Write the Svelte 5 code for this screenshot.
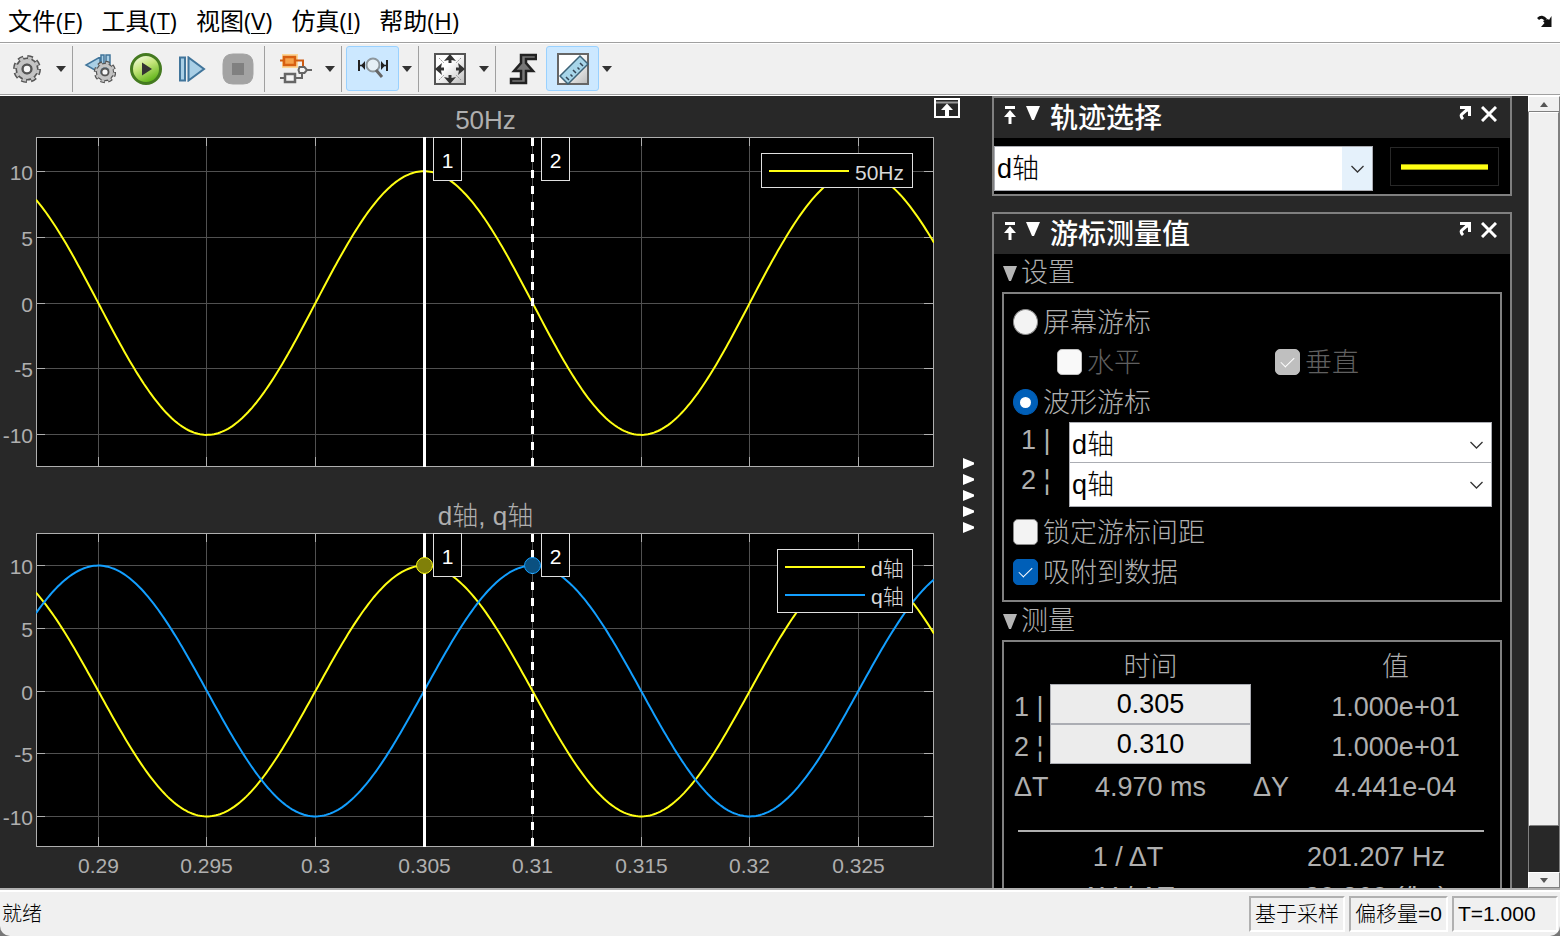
<script lang="ts">
    type Trace = { name: string; color: string; peak: number };
    type Plot = { id: string; title: string; traces: Trace[]; bottom: number; showTimes: boolean; markers: boolean };

    const menus = [
        { label: '文件', key: 'F' },
        { label: '工具', key: 'T' },
        { label: '视图', key: 'V' },
        { label: '仿真', key: 'I' },
        { label: '帮助', key: 'H' }
    ];

    const tMin = 0.28713;
    const tMax = 0.32844;
    const yMin = -12.4;
    const yMax = 12.56;
    const period = 0.02;
    const left = 36;
    const top = 41;

    const times = [0.29, 0.295, 0.3, 0.305, 0.31, 0.315, 0.32, 0.325];
    const levels = [10, 5, 0, -5, -10];

    const plots: Plot[] = [
        {
            id: 'p1',
            title: '50Hz',
            traces: [{ name: '50Hz', color: '#ffff13', peak: 0.305 }],
            bottom: 25,
            showTimes: false,
            markers: false
        },
        {
            id: 'p2',
            title: 'd轴, q轴',
            traces: [
                { name: 'd轴', color: '#ffff13', peak: 0.305 },
                { name: 'q轴', color: '#139fff', peak: 0.31 }
            ],
            bottom: 41,
            showTimes: true,
            markers: true
        }
    ];

    let plotWidth = $state(934);
    let plotHeight = $state(396);

    let signal = $state('d轴');
    let mode = $state('waveform');
    let cursor1 = $state('d轴');
    let cursor2 = $state('q轴');
    let lockSpacing = $state(false);
    let snapToData = $state(true);
    let time1 = $state('0.305');
    let time2 = $state('0.310');

    let innerWidth = $derived(plotWidth - left - 1);

    function px(t: number) {
        return Math.floor(left + ((t - tMin) / (tMax - tMin)) * innerWidth) + 0.5;
    }

    function py(v: number, h: number) {
        return Math.round(top + ((yMax - v) / (yMax - yMin)) * h) + 0.5;
    }

    function wave(peak: number, h: number) {
        const points: string[] = [];
        for (let i = 0; i <= innerWidth + 1; i += 2) {
            const t = tMin + (i / innerWidth) * (tMax - tMin);
            const v = 10 * Math.cos((2 * Math.PI * (t - peak)) / period);
            const y = top + 0.5 + ((yMax - v) / (yMax - yMin)) * h;
            points.push(`${left + i},${y.toFixed(1)}`);
        }
        return points.join(' ');
    }
</script>

{#snippet plotView(p: Plot)}
    {@const h = plotHeight - top - p.bottom - 1}
    {@const right = left + innerWidth}
    {@const legendWidth = p.traces.length > 1 ? 136 : 152}
    {@const legendLeft = right - 20 - legendWidth}
    <svg width={plotWidth} height={plotHeight} role="img" aria-label={p.title}>
        <clipPath id={p.id}>
            <rect x={left} y={top} width={innerWidth + 1} height={h} />
        </clipPath>
        <text class="plot-title" x={left + innerWidth / 2 + 1} y="33">{p.title}</text>
        <rect x={left + 0.5} y={top + 0.5} width={innerWidth} height={h} fill="#000" />

        {#each times as t}
            <path class="grid" d="M{px(t)} {top}v{h}" />
            <path class="axis" d="M{px(t)} {top}v9M{px(t)} {top + h}v-9" />
            {#if p.showTimes}
                <text class="tick middle" x={px(t)} y={top + h + 27}>{t}</text>
            {/if}
        {/each}
        {#each levels as v}
            <path class="grid" d="M{left} {py(v, h)}h{innerWidth}" />
            <path class="axis" d="M{left} {py(v, h)}h9M{right} {py(v, h)}h-9" />
            <text class="tick end" x="33" y={py(v, h) + 8}>{v}</text>
        {/each}
        <rect class="axis" x={left + 0.5} y={top + 0.5} width={innerWidth} height={h} />

        <g clip-path="url(#{p.id})">
            {#each p.traces as trace}
                <polyline points={wave(trace.peak, h)} fill="none" stroke={trace.color} stroke-width="2" />
            {/each}
        </g>

        <path d="M{px(0.305)} {top}v{h + 1}" stroke="#fff" stroke-width="3" />
        <path d="M{px(0.31)} {top + 1}v{h}" stroke="#fff" stroke-width="3" stroke-dasharray="8 8" />
        {#if p.markers}
            <circle cx={px(0.305)} cy={py(10, h)} r="8" fill="#808009" stroke="#ffff13" />
            <circle cx={px(0.31)} cy={py(10, h)} r="8" fill="#0a5080" stroke="#139fff" />
        {/if}
        {#each [0.305, 0.31] as t, i}
            <rect class="tag" x={px(t) + 9} y={top + 0.5} width="28" height="43" />
            <text class="tag-text" x={px(t) + 23} y={top + 31}>{i + 1}</text>
        {/each}

        <rect class="legend" x={legendLeft + 0.5} y={top + 16.5} width={legendWidth - 1} height={p.traces.length * 29 + 5} />
        {#each p.traces as trace, i}
            <path d="M{legendLeft + 8} {top + 34 + i * 28}h80" stroke={trace.color} stroke-width="2" />
            <text class="legend-text" x={legendLeft + 94} y={top + 43 + i * 28}>{trace.name}</text>
        {/each}
    </svg>
{/snippet}

{#snippet titleBar(text: string)}
    <header class="panel-title">
        <button aria-label="移动">
            <svg width="12" height="18" viewBox="0 0 12 18" fill="#fff">
                <path d="M1 0h10v3H1zM6 4l6 7H7.500v7h-3v-7H0z" />
            </svg>
        </button>
        <button aria-label="折叠">
            <svg width="14" height="14" viewBox="0 0 14 14" fill="#fff"><path d="M0 0h14L8 14H6z" /></svg>
        </button>
        <h2>{text}</h2>
        <button aria-label="取消停靠">
            <svg width="12" height="14" viewBox="0 0 12 14" fill="none" stroke="#fff" stroke-width="3">
                <path d="M1 1.500h9.500V10M10 2L3 8q-2 2 1 5" />
                <path d="M5 2h6v6z" fill="#fff" stroke="none" />
            </svg>
        </button>
        <button aria-label="关闭">
            <svg width="16" height="16" viewBox="0 0 16 16" fill="none" stroke="#fff" stroke-width="3">
                <path d="M1 1l14 14M15 1L1 15" />
            </svg>
        </button>
    </header>
{/snippet}

{#snippet chevron()}
    <svg class="chevron" width="13" height="8" viewBox="0 0 13 8" fill="none" stroke="#333" stroke-width="1.300"><path d="M.5 1l6 6 6-6" /></svg>
{/snippet}

{#snippet dropArrow(label: string)}
    <button class="drop" aria-label={label}>
        <svg width="10" height="6" viewBox="0 0 10 6" fill="#333"><path d="M0 0h10L5 6z" /></svg>
    </button>
{/snippet}

{#snippet gear()}
    <g fill="none" stroke="#555">
        <circle cx="15" cy="15" r="11.500" stroke-width="5" stroke-dasharray="5.200 3.830" />
        <circle cx="15" cy="15" r="9" stroke-width="5" />
        <circle cx="15" cy="15" r="11" stroke="#c4c4c4" stroke-width="3" stroke-dasharray="3.600 5.040" stroke-dashoffset="-.8" />
        <circle cx="15" cy="15" r="8" stroke="#c4c4c4" stroke-width="4" />
        <circle cx="15" cy="15" r="4.500" stroke-width="2.500" fill="#f8f8f8" />
    </g>
{/snippet}

<div class="scope">
    <nav class="menubar">
        {#each menus as menu}
            <button>{menu.label}(<u>{menu.key}</u>)</button>
        {/each}
        <button class="dock" aria-label="停靠">
            <svg width="16" height="13" viewBox="0 0 16 13">
                <path d="M1 4Q5 0 9 5" fill="none" stroke="#111" stroke-width="3" />
                <path d="M14.500 1v11H4L7.500 8 6 6l5-2 1 1z" fill="#111" />
            </svg>
        </button>
    </nav>

    <div class="toolbar">
        <div class="group first">
            <button class="tool wide" aria-label="配置属性">
                <svg width="30" height="30" viewBox="0 0 30 30">{@render gear()}</svg>
            </button>
            {@render dropArrow('配置菜单')}
        </div>
        <div class="group">
            <button class="tool" aria-label="步进选项">
                <svg width="32" height="32" viewBox="0 0 32 32">
                    <path d="M17 2h3v14h-3zM22 2h4v14h-4zM16 4v16L2 12z" fill="#a9cfe6" stroke="#41759b" stroke-width="1.500" />
                    <g transform="translate(9 7) scale(.8)">{@render gear()}</g>
                </svg>
            </button>
            <button class="tool" aria-label="运行">
                <svg width="32" height="32" viewBox="0 0 32 32">
                    <defs>
                        <linearGradient id="run" x1="0" y1="0" x2=".5" y2="1">
                            <stop offset="0" stop-color="#fff" />
                            <stop offset=".5" stop-color="#c6e67c" />
                            <stop offset="1" stop-color="#62b51b" />
                        </linearGradient>
                    </defs>
                    <circle cx="16" cy="16" r="14.500" fill="url(#run)" stroke="#447a20" stroke-width="3" />
                    <path d="M12 9.500v13l10-6.500z" fill="#333" />
                </svg>
            </button>
            <button class="tool" aria-label="步进">
                <svg width="28" height="26" viewBox="0 0 28 26">
                    <path d="M2 1.500h5v23H2zM10.500 1.500v23L26 13z" fill="#a9cfe6" stroke="#41759b" stroke-width="2" />
                </svg>
            </button>
            <button class="tool" aria-label="停止" disabled>
                <svg width="32" height="32" viewBox="0 0 32 32">
                    <path d="M11 1h10q10 0 10 10v10q0 10-10 10H11Q1 31 1 21V11Q1 1 11 1z" fill="#a3a3a3" stroke="#a3a3a3" />
                    <path d="M10 10h12v12H10z" fill="#808080" />
                </svg>
            </button>
        </div>
        <div class="group">
            <button class="tool wide" aria-label="信号">
                <svg width="34" height="32" viewBox="0 0 34 32" fill="none">
                    <path d="M3 1h16v14H3z" fill="#ffcf80" opacity=".8" />
                    <path d="M1 7.500h5M17 7.500h7v6" stroke="#cc5a12" stroke-width="2" />
                    <path d="M5 4h11v8H5z" fill="#f5a14b" stroke="#d85f10" stroke-width="2.500" />
                    <path d="M1 25h5M16 25h7v-6M28 17h5" stroke="#666" stroke-width="2" />
                    <path d="M6 21h10v8H6z" fill="#f4f4f4" stroke="#666" stroke-width="2.500" />
                    <path d="M20.500 14h5l2.500 3-2.500 3h-5l-1-3z" fill="#f4f4f4" stroke="#666" stroke-width="2" />
                </svg>
            </button>
            {@render dropArrow('信号菜单')}
        </div>
        <div class="group">
            <button class="tool wide active" aria-label="缩放">
                <svg width="32" height="26" viewBox="0 0 32 26" fill="none">
                    <path d="M2 4v11M30 4v11" stroke="#222" stroke-width="2" />
                    <path d="M3 9.500h3M26 9.500h3" stroke="#222" stroke-width="1.500" />
                    <path d="M8 5v9l-4-4.500zM24 5v9l4-4.500z" fill="#222" />
                    <circle cx="16" cy="9" r="6.500" fill="#e6f0f6" stroke="#8d979d" stroke-width="2" />
                    <path d="M19 14l6 7" stroke="#666" stroke-width="3" />
                </svg>
            </button>
            {@render dropArrow('缩放菜单')}
        </div>
        <div class="group">
            <button class="tool wide" aria-label="缩放到适合">
                <svg width="32" height="32" viewBox="0 0 32 32">
                    <defs>
                        <linearGradient id="frame" x1="0" y1="0" x2="1" y2="1">
                            <stop offset=".4" stop-color="#fff" />
                            <stop offset="1" stop-color="#bbb" />
                        </linearGradient>
                    </defs>
                    <path d="M1 1h30v30H1z" fill="url(#frame)" stroke="#555" stroke-width="2" />
                    <path
                        d="M16 1l6 7-4.500-1v3h-3V7L10 8zM16 31l6-7-4.500 1v-3h-3v3L10 24zM1 16l7-6-1 4.500h3v3H7L8 22zM31 16l-7-6 1 4.500h-3v3h3L24 22z"
                        fill="#333"
                    />
                    <path d="M5 5l5 5M27 5l-5 5M5 27l5-5M27 27l-5-5" stroke="#999" stroke-dasharray="2 1" />
                </svg>
            </button>
            {@render dropArrow('缩放到适合菜单')}
        </div>
        <div class="group last">
            <button class="tool" aria-label="触发器">
                <svg width="28" height="32" viewBox="0 0 28 32">
                    <path
                        d="M12 2h15v4H17v4l7 8h-7v12H2v-4h10v-8H5l7-8z"
                        fill="#777"
                        stroke="#222"
                        stroke-width="2.500"
                    />
                </svg>
            </button>
            <button class="tool wide active" aria-label="游标测量" aria-pressed="true">
                <svg width="32" height="32" viewBox="0 0 32 32">
                    <path d="M1 1h30v30H1z" fill="url(#frame)" stroke="#666" stroke-width="2" />
                    <path d="M23 3l8 8-20 20-8-8z" fill="#a7d5e9" stroke="#3d6277" stroke-width="1.500" />
                    <path d="M12 27l-3-3M15.500 23.500l-2-2M19 20l-3-3M22.500 16.500l-2-2M26 13l-3-3" stroke="#345" stroke-width="1.500" />
                </svg>
            </button>
            {@render dropArrow('测量菜单')}
        </div>
    </div>

    <main>
        <div class="plots">
            <div class="plot" bind:clientWidth={plotWidth} bind:clientHeight={plotHeight}>
                {@render plotView(plots[0])}
            </div>
            <div class="plot">
                {@render plotView(plots[1])}
            </div>
        </div>

        <div class="gutter">
            <button class="maximize" aria-label="最大化坐标区">
                <svg width="26" height="20" viewBox="0 0 26 20">
                    <path d="M1 1h24v18H1z" fill="#282828" stroke="#fff" stroke-width="2" />
                    <path d="M2 4.500h22" stroke="#999" stroke-width="2" />
                    <path d="M13 5.500l6 6.500h-4v6h-4v-6H7z" fill="#fff" />
                </svg>
            </button>
            <button class="splitter" aria-label="隐藏面板">
                {#each Array(5) as _}
                    <svg width="11" height="11" viewBox="0 0 11 11" fill="#fff"><path d="M0 0l11 4.500v2L0 11z" /></svg>
                {/each}
            </button>
        </div>

        <aside>
            <section class="panel">
                {@render titleBar('轨迹选择')}
                <div class="trace-row">
                    <div class="select hot">
                        <select bind:value={signal} aria-label="轨迹选择">
                            <option>d轴</option>
                            <option>q轴</option>
                        </select>
                        {@render chevron()}
                    </div>
                    <div class="swatch"><span></span></div>
                </div>
            </section>

            <section class="panel">
                {@render titleBar('游标测量值')}
                <button class="disclosure">
                    <svg width="14" height="15" viewBox="0 0 14 15" fill="#b5b5b5"><path d="M0 0h14L8 15H6z" /></svg>
                    设置
                </button>
                <div class="box">
                    <label class="option"><input type="radio" value="screen" bind:group={mode} />屏幕游标</label>
                    <div class="sub">
                        <label class="option"><input type="checkbox" disabled />水平</label>
                        <label class="option"><input type="checkbox" checked disabled />垂直</label>
                    </div>
                    <label class="option"><input type="radio" value="waveform" bind:group={mode} />波形游标</label>
                    <div class="sources">
                        <label for="src1">1 |</label>
                        <div class="select">
                            <select id="src1" bind:value={cursor1}>
                                <option>d轴</option>
                                <option>q轴</option>
                            </select>
                            {@render chevron()}
                        </div>
                        <label for="src2">2 ¦</label>
                        <div class="select">
                            <select id="src2" bind:value={cursor2}>
                                <option>d轴</option>
                                <option>q轴</option>
                            </select>
                            {@render chevron()}
                        </div>
                    </div>
                    <label class="option"><input type="checkbox" bind:checked={lockSpacing} />锁定游标间距</label>
                    <label class="option"><input type="checkbox" bind:checked={snapToData} />吸附到数据</label>
                </div>

                <button class="disclosure">
                    <svg width="14" height="15" viewBox="0 0 14 15" fill="#b5b5b5"><path d="M0 0h14L8 15H6z" /></svg>
                    测量
                </button>
                <div class="box">
                    <table>
                        <colgroup>
                            <col class="c-label" />
                            <col class="c-time" />
                            <col class="c-delta" />
                            <col />
                        </colgroup>
                        <thead>
                            <tr><td></td><th>时间</th><td></td><th>值</th></tr>
                        </thead>
                        <tbody>
                            <tr>
                                <th class="name"><label for="t1">1 |</label></th>
                                <td class="field"><input id="t1" type="text" bind:value={time1} /></td>
                                <td></td>
                                <td>1.000e+01</td>
                            </tr>
                            <tr>
                                <th class="name"><label for="t2">2 ¦</label></th>
                                <td class="field"><input id="t2" type="text" bind:value={time2} /></td>
                                <td></td>
                                <td>1.000e+01</td>
                            </tr>
                            <tr>
                                <th class="name">ΔT</th>
                                <td>4.970 ms</td>
                                <th>ΔY</th>
                                <td>4.441e-04</td>
                            </tr>
                        </tbody>
                    </table>
                    <hr />
                    <table>
                        <tbody>
                            <tr><th>1 / ΔT</th><td>201.207 Hz</td></tr>
                            <tr><th>ΔY / ΔT</th><td>89.360 (/ks)</td></tr>
                        </tbody>
                    </table>
                </div>
            </section>
        </aside>

        <div class="scrollbar">
            <button aria-label="向上滚动">
                <svg width="8" height="5" viewBox="0 0 8 5" fill="#555"><path d="M4 0l4 5H0z" /></svg>
            </button>
            <div class="track"><div class="thumb"></div></div>
            <button aria-label="向下滚动">
                <svg width="8" height="5" viewBox="0 0 8 5" fill="#555"><path d="M0 0h8L4 5z" /></svg>
            </button>
        </div>
    </main>

    <footer>
        <span class="ready">就绪</span>
        <span class="cell">基于采样</span>
        <span class="cell">偏移量=0</span>
        <span class="cell time">T=1.000</span>
    </footer>
</div>

<style>
    :global(body) {
        margin: 0;
        background: #777;
    }

    .scope {
        display: flex;
        flex-direction: column;
        height: 100vh;
        overflow: hidden;
        border-radius: 0 0 10px 10px;
        background: #f0f0f0;
        color: #000;
        font-family: "Liberation Sans", "Noto Sans CJK SC", sans-serif;
    }

    .scope * {
        box-sizing: border-box;
    }

    button {
        display: flex;
        align-items: center;
        justify-content: center;
        padding: 0;
        border: none;
        background: none;
        color: inherit;
        font: inherit;
    }

    svg {
        display: block;
        flex: none;
    }

    .menubar {
        display: flex;
        align-items: center;
        gap: 19px;
        flex: none;
        height: 43px;
        padding: 0 7px 0 8px;
        border-bottom: 1px solid #a0a0a0;
        background: #fff;
        font-family: "Open Sans", "Noto Sans CJK SC", sans-serif;
        font-size: 24px;
        line-height: 42px;
    }

    .menubar button {
        display: block;
        white-space: nowrap;
    }

    .menubar u {
        text-decoration-thickness: 1px;
        text-underline-offset: 3px;
    }

    .menubar .dock {
        margin-left: auto;
    }

    .toolbar {
        display: flex;
        flex: none;
        height: 53px;
        padding: 2px 0 3px;
        border-top: 1px solid #fff;
        border-bottom: 1px solid #fff;
        box-shadow: inset 0 -1px #a0a0a0;
    }

    .group {
        display: flex;
        padding: 0 3px 0 4px;
        border-right: 1px solid #a0a0a0;
    }

    .group.first {
        padding-left: 0;
    }

    .group.last {
        border-right: none;
    }

    .tool {
        width: 46px;
        height: 45px;
        border: 1px solid transparent;
        border-radius: 3px;
    }

    .tool.wide {
        width: 53px;
    }

    .tool.active {
        border-color: #99d1ff;
        background: #cce8ff;
    }

    .drop {
        width: 16px;
        height: 45px;
    }

    main {
        display: flex;
        flex: 1;
        min-height: 0;
        background: #282828;
    }

    .plots {
        display: flex;
        flex: 1;
        flex-direction: column;
        min-width: 0;
    }

    .plot {
        flex: 1 1 0;
        min-height: 0;
        overflow: hidden;
    }

    .grid {
        fill: none;
        stroke: #505050;
    }

    .axis {
        fill: none;
        stroke: #afafaf;
    }

    .plot-title {
        fill: #afafaf;
        font-size: 26px;
        font-weight: 300;
        text-anchor: middle;
    }

    .tick {
        fill: #afafaf;
        font-size: 21px;
    }

    .middle {
        text-anchor: middle;
    }

    .end {
        text-anchor: end;
    }

    .tag {
        fill: #000;
        stroke: #e0e0e0;
    }

    .tag-text {
        fill: #fff;
        font-size: 21px;
        text-anchor: middle;
    }

    .legend {
        fill: #000;
        stroke: #e0e0e0;
    }

    .legend-text {
        fill: #d8d8d8;
        font-size: 21px;
        font-weight: 300;
    }

    .gutter {
        display: flex;
        flex: none;
        gap: 3px;
        width: 58px;
    }

    .maximize {
        align-self: flex-start;
        padding-top: 2px;
    }

    .splitter {
        flex-direction: column;
        gap: 5px;
        padding-top: 6px;
    }

    aside {
        display: flex;
        flex: none;
        flex-direction: column;
        gap: 16px;
        width: 536px;
        padding-right: 16px;
        overflow: hidden;
        font-size: 27px;
        font-weight: 300;
    }

    .panel {
        flex: none;
        border: 2px solid #808080;
        background: #000;
        color: #afafaf;
    }

    .panel-title {
        display: flex;
        align-items: flex-start;
        gap: 10px;
        height: 40px;
        padding: 8px 13px 0 10px;
        background: #282828;
        color: #fff;
    }

    .panel-title h2 {
        flex: 1;
        margin: 0;
        font-size: 28px;
        font-weight: 500;
        line-height: 26px;
    }

    .trace-row {
        display: flex;
        gap: 17px;
        padding: 8px 11px 3px 0;
    }

    .trace-row .select {
        flex: 1;
    }

    .select {
        display: grid;
        grid-template-columns: 1fr 31px;
        align-items: center;
    }

    .select select {
        grid-area: 1 / 1 / 2 / 3;
        width: 100%;
        height: 45px;
        padding: 0 2px;
        border: 1px solid #abadb3;
        border-radius: 0;
        appearance: none;
        background: #fff;
        color: #000;
        font: inherit;
    }

    .select.hot select {
        background: linear-gradient(to left, #e5f1fb 30px, #fff 30px);
    }

    .chevron {
        z-index: 1;
        grid-area: 1 / 2;
        justify-self: center;
        pointer-events: none;
    }

    .swatch {
        display: flex;
        align-items: center;
        justify-content: center;
        width: 109px;
        height: 39px;
        margin-top: 1px;
        border: 1px solid #282828;
    }

    .swatch span {
        width: 87px;
        height: 6px;
        border: 1px solid #a5a50c;
        border-width: 1px 0;
        background: #ffff13;
    }

    .disclosure {
        justify-content: flex-start;
        gap: 4px;
        height: 38px;
        padding-left: 9px;
        line-height: 38px;
    }

    .box {
        margin: 0 8px;
        padding: 8px 0;
        border: 2px solid #808080;
    }

    .option {
        display: flex;
        align-items: center;
        gap: 5px;
        height: 40px;
        padding: 0 0 4px 9px;
    }

    .option:has(:disabled) {
        color: #606060;
    }

    .option input {
        display: grid;
        place-content: center;
        flex: none;
        width: 25px;
        height: 26px;
        margin: 4px 0 0;
        border: 1px solid #8a8a8a;
        border-radius: 5px;
        appearance: none;
        background: #f3f3f3;
    }

    .option input[type='radio'] {
        border-radius: 50%;
    }

    .option input:disabled {
        border-color: #c0c0c0;
        background: #f9f9f9;
    }

    .option input:checked {
        border-color: #005fb8;
        background: #005fb8;
    }

    .option input:checked:disabled {
        border-color: #bfbfbf;
        background: #bfbfbf;
    }

    .option input[type='radio']:checked::before {
        width: 11px;
        height: 11px;
        border-radius: 50%;
        background: #fff;
        content: '';
    }

    .option input[type='checkbox']:checked::before {
        width: 12px;
        height: 6px;
        margin-bottom: 3px;
        border: solid #fff;
        border-width: 0 0 1px 1px;
        content: '';
        transform: rotate(-45deg);
    }

    .sub {
        display: grid;
        grid-template-columns: 218px 1fr;
        padding-left: 44px;
    }

    .sources {
        display: grid;
        grid-template-columns: 48px 1fr;
        grid-template-rows: 40px 50px;
        padding: 0 8px 0 17px;
    }

    .sources label {
        line-height: 36px;
    }

    .sources .select {
        align-items: start;
    }

    .sources .chevron {
        margin-top: 19px;
    }

    table {
        width: 100%;
        border-collapse: collapse;
        table-layout: fixed;
    }

    .c-label {
        width: 46px;
    }

    .c-time {
        width: 201px;
    }

    .c-delta {
        width: 40px;
    }

    th,
    td {
        height: 40px;
        padding: 6px 0 0;
        font-weight: inherit;
        line-height: 34px;
        text-align: center;
    }

    thead th,
    thead td {
        height: 34px;
        padding: 0;
    }

    th.name {
        padding-left: 10px;
        text-align: left;
        white-space: nowrap;
    }

    td.field {
        padding: 0;
    }

    .field input {
        display: block;
        width: 100%;
        height: 40px;
        padding: 0;
        border: 1px solid #abadb3;
        background: #ececec;
        color: #000;
        font: inherit;
        text-align: center;
    }

    hr {
        height: 2px;
        margin: 26px 16px 2px 14px;
        border: none;
        background: #afafaf;
    }

    .scrollbar {
        display: flex;
        flex: none;
        flex-direction: column;
        width: 32px;
    }

    .scrollbar button,
    .thumb {
        border: 1px solid #fff;
        border-right-color: #808080;
        border-bottom-color: #808080;
        background: #f0f0f0;
    }

    .scrollbar button {
        height: 16px;
    }

    .track {
        display: flex;
        flex: 1;
        flex-direction: column;
        border-left: 1px solid #808080;
        border-right: 1px solid #808080;
    }

    .thumb {
        flex: none;
        height: 94%;
    }

    footer {
        display: flex;
        align-items: flex-start;
        gap: 4px;
        flex: none;
        height: 48px;
        padding: 4px 2px 0;
        border-top: 2px solid #b0b0b0;
        box-shadow: inset 0 2px #fff;
        font-size: 21px;
        font-weight: 300;
        line-height: 32px;
    }

    .ready {
        flex: 1;
        font-size: 20px;
        line-height: 40px;
    }

    .cell {
        margin-top: 2px;
        padding: 0 4px;
        border: 2px solid #b0b0b0;
        border-right-color: #fff;
        border-bottom-color: #fff;
        white-space: nowrap;
    }

    .time {
        width: 106px;
    }
</style>
